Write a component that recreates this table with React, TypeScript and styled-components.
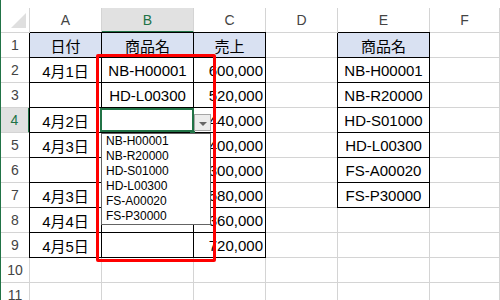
import React from "react";
import styled, { createGlobalStyle, css } from "styled-components";

const columns = ["A", "B", "C", "D", "E", "F"];

type Row = [string, string, string, string, string];

const rows: Row[] = [
  ["日付", "商品名", "売上", "", "商品名"],
  ["4月1日", "NB-H00001", "600,000", "", "NB-H00001"],
  ["", "HD-L00300", "520,000", "", "NB-R20000"],
  ["4月2日", "", "440,000", "", "HD-S01000"],
  ["4月3日", "", "400,000", "", "HD-L00300"],
  ["", "", "300,000", "", "FS-A00020"],
  ["4月3日", "", "580,000", "", "FS-P30000"],
  ["4月4日", "", "360,000", "", ""],
  ["4月5日", "", "720,000", "", ""],
  ["", "", "", "", ""],
  ["", "", "", "", ""],
];

const options = [
  "NB-H00001",
  "NB-R20000",
  "HD-S01000",
  "HD-L00300",
  "FS-A00020",
  "FS-P30000",
];

// which cells belong to a bordered table: A1:C9 and E1:E7
const inTable = (r: number, c: number) =>
  (c <= 2 && r <= 9) || (c === 4 && r <= 7);

const App = () => {
  return (
    <>
      <GlobalStyle />
      <Sheet>
        <Corner>
          <CornerMark />
        </Corner>
        {columns.map((col) => (
          <ColHeader key={col} $selected={col === "B"}>
            {col}
          </ColHeader>
        ))}

        {rows.map((row, i) => {
          const r = i + 1;
          return (
            <React.Fragment key={r}>
              <RowHeader $selected={r === 4}>{r}</RowHeader>
              {[...row, ""].map((value, c) => {
                const boxed = inTable(r, c);
                const active = r === 4 && c === 1;
                return (
                  <Cell
                    key={c}
                    $boxed={boxed}
                    $head={boxed && r === 1}
                    $left={boxed && (c === 0 || c === 4)}
                    $top={boxed && r === 1}
                    $align={c === 2 && r > 1 ? "right" : "center"}
                    $active={active}
                  >
                    {value}
                    {active && (
                      <>
                        <SelectionFrame />
                        <FillHandle />
                        <DropButton>
                          <Caret />
                        </DropButton>
                        <DropList>
                          {options.map((o) => (
                            <DropItem key={o}>{o}</DropItem>
                          ))}
                        </DropList>
                      </>
                    )}
                  </Cell>
                );
              })}
            </React.Fragment>
          );
        })}

        <Highlight />
      </Sheet>
    </>
  );
};

const GlobalStyle = createGlobalStyle`
  html, body {
    margin: 0;
    background: #ffffff;
  }
  body {
    font-family: "Liberation Sans", "Noto Sans CJK JP", sans-serif;
  }
`;

const grid = "#d4d4d4";
const green = "#217346";

const Sheet = styled.div`
  position: relative;
  width: 500px;
  height: 300px;
  box-sizing: border-box;
  overflow: hidden;
  padding-top: 8px;
  border-left: 1px solid ${green};
  display: grid;
  grid-template-columns: 29px 72px 92px 72px 72px 92px 1fr;
  grid-auto-rows: 25px;
  background: #ffffff;
`;

const Corner = styled.div`
  box-sizing: border-box;
  border-right: 1px solid ${grid};
  border-bottom: 1px solid ${grid};
  display: flex;
  align-items: flex-end;
  justify-content: flex-end;
  padding: 0 3px 4px 0;
`;

const CornerMark = styled.div`
  width: 0;
  height: 0;
  border-left: 15px solid transparent;
  border-bottom: 15px solid #dfdfdf;
`;

const ColHeader = styled.div<{ $selected?: boolean }>`
  box-sizing: border-box;
  border-right: 1px solid ${grid};
  border-bottom: 1px solid ${grid};
  display: flex;
  align-items: center;
  justify-content: center;
  font-size: 14px;
  color: #444444;
  ${(p) =>
    p.$selected &&
    css`
      background: #e1e1e1;
      color: ${green};
      border-bottom: 2px solid ${green};
    `}
`;

const RowHeader = styled.div<{ $selected?: boolean }>`
  box-sizing: border-box;
  border-right: 1px solid ${grid};
  border-bottom: 1px solid ${grid};
  display: flex;
  align-items: center;
  justify-content: center;
  font-size: 14px;
  color: #444444;
  ${(p) =>
    p.$selected &&
    css`
      background: #e1e1e1;
      color: ${green};
      border-right: 2px solid ${green};
    `}
`;

const Cell = styled.div<{
  $boxed?: boolean;
  $head?: boolean;
  $left?: boolean;
  $top?: boolean;
  $align: "center" | "right";
  $active?: boolean;
}>`
  box-sizing: border-box;
  border-right: 1px solid ${(p) => (p.$boxed ? "#000000" : grid)};
  border-bottom: 1px solid ${(p) => (p.$boxed ? "#000000" : grid)};
  background: ${(p) => (p.$head ? "#d9e1f2" : "transparent")};
  box-shadow: ${(p) =>
    [p.$left && "-1px 0 0 #000000", p.$top && "0 -1px 0 #000000"]
      .filter(Boolean)
      .join(", ") || "none"};
  display: flex;
  align-items: center;
  justify-content: ${(p) => (p.$align === "right" ? "flex-end" : "center")};
  padding: 0 2px;
  font-size: 15px;
  color: #000000;
  white-space: nowrap;
  ${(p) =>
    p.$active &&
    css`
      position: relative;
      z-index: 2;
    `}
`;

const SelectionFrame = styled.div`
  position: absolute;
  top: 0;
  left: -2px;
  right: -1px;
  bottom: 0;
  border: 2px solid ${green};
  pointer-events: none;
`;

const FillHandle = styled.div`
  position: absolute;
  right: -2px;
  bottom: -2px;
  width: 5px;
  height: 4px;
  background: ${green};
`;

const DropButton = styled.div`
  position: absolute;
  top: 6px;
  left: 92px;
  width: 17px;
  height: 17px;
  box-sizing: border-box;
  border: 1px solid #a6a6a6;
  background: #ececec;
  display: flex;
  align-items: center;
  justify-content: center;
`;

const Caret = styled.div`
  width: 0;
  height: 0;
  margin-top: 2px;
  border-left: 4px solid transparent;
  border-right: 4px solid transparent;
  border-top: 4px solid #666666;
`;

const DropList = styled.div`
  position: absolute;
  top: 25px;
  left: -1px;
  width: 110px;
  height: 92px;
  box-sizing: border-box;
  border: 1px solid #646464;
  background: #ffffff;
  padding: 0 0 0 4px;
  display: flex;
  flex-direction: column;
`;

const DropItem = styled.div`
  font-size: 12px;
  line-height: 15px;
  height: 15px;
  color: #000000;
  text-align: left;
`;

const Highlight = styled.div`
  position: absolute;
  left: 95px;
  top: 54px;
  width: 120px;
  height: 208px;
  box-sizing: border-box;
  border: 3px solid #ff0000;
  border-radius: 2px;
  z-index: 3;
  pointer-events: none;
`;

export default App;
